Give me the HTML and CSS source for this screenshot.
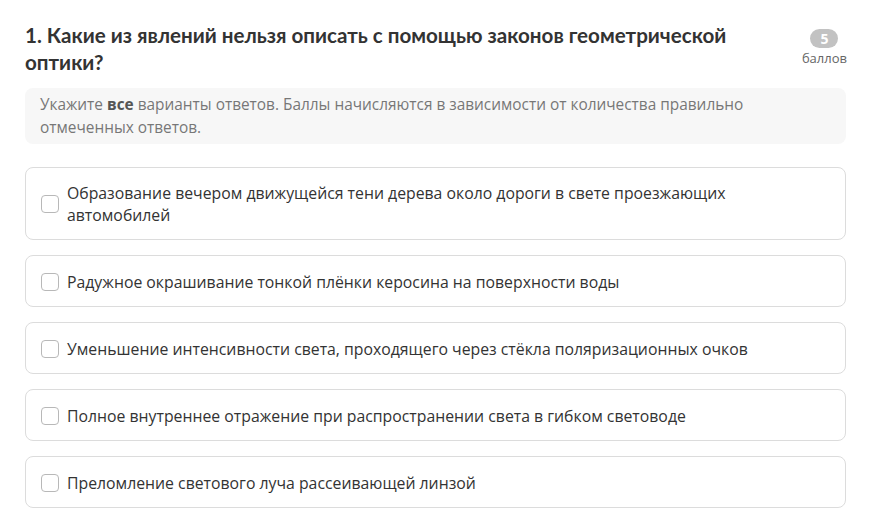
FILE: index.html
```html
<!DOCTYPE html>
<html lang="ru">
<head>
<meta charset="utf-8">
<link rel="stylesheet" href="styles.css">
</head>
<body>
<div class="page">
  <div class="head">
    <h1 class="title">1. Какие из явлений нельзя описать с помощью законов геометрической оптики?</h1>
    <div class="score">
      <span class="pill">5</span>
      <span class="unit">баллов</span>
    </div>
  </div>
  <div class="hint">Укажите <b>все</b> варианты ответов. Баллы начисляются в зависимости от количества правильно отмеченных ответов.</div>
  <div class="options">
    <label class="opt"><span class="box"></span><span class="txt">Образование вечером движущейся тени дерева около дороги в свете проезжающих автомобилей</span></label>
    <label class="opt"><span class="box"></span><span class="txt">Радужное окрашивание тонкой плёнки керосина на поверхности воды</span></label>
    <label class="opt"><span class="box"></span><span class="txt">Уменьшение интенсивности света, проходящего через стёкла поляризационных очков</span></label>
    <label class="opt"><span class="box"></span><span class="txt">Полное внутреннее отражение при распространении света в гибком световоде</span></label>
    <label class="opt"><span class="box"></span><span class="txt">Преломление светового луча рассеивающей линзой</span></label>
  </div>
</div>
</body>
</html>
```

FILE: styles.css
```css
* { box-sizing: border-box; }
html, body { margin: 0; padding: 0; background: #fff; }
body { font-family: "Open Sans", Lato, sans-serif; color: #333; }
.page { padding: 22px 36px 0 25px; width: 882px; }
.head { display: flex; justify-content: space-between; align-items: flex-start; }
.title { margin: 0; font-family: Lato, sans-serif; font-size: 20.6px; line-height: 27px; font-weight: 700; color: #333; width: 730px; }
.score { display: flex; flex-direction: column; align-items: center; padding-top: 7px; margin-right: -1px; }
.pill { background: #c2c2c2; color: #fff; font-weight: 700; font-size: 14px; line-height: 19px; height: 19px; width: 28px; border-radius: 10px; text-align: center; }
.unit { font-size: 13px; line-height: 16px; color: #666; margin-top: 2px; }
.hint { margin-top: 12px; background: #f7f7f7; border-radius: 8px; padding: 5px 15px 5px 15px; font-size: 15.4px; line-height: 23px; color: #777; height: 56px; }
.hint b { font-weight: 700; color: #555; }
.options { margin-top: 23px; display: flex; flex-direction: column; gap: 15px; }
.opt { display: flex; align-items: center; border: 1px solid #dcdcdc; border-radius: 8px; padding: 14px 15px 13px 15px; min-height: 52px; font-size: 15.8px; line-height: 22px; color: #333; }
.box { flex: none; width: 18px; height: 18px; border: 1.5px solid #b8b8b8; border-radius: 4px; margin-right: 8px; background: #fff; }
.txt { display: block; max-width: 700px; }
```
